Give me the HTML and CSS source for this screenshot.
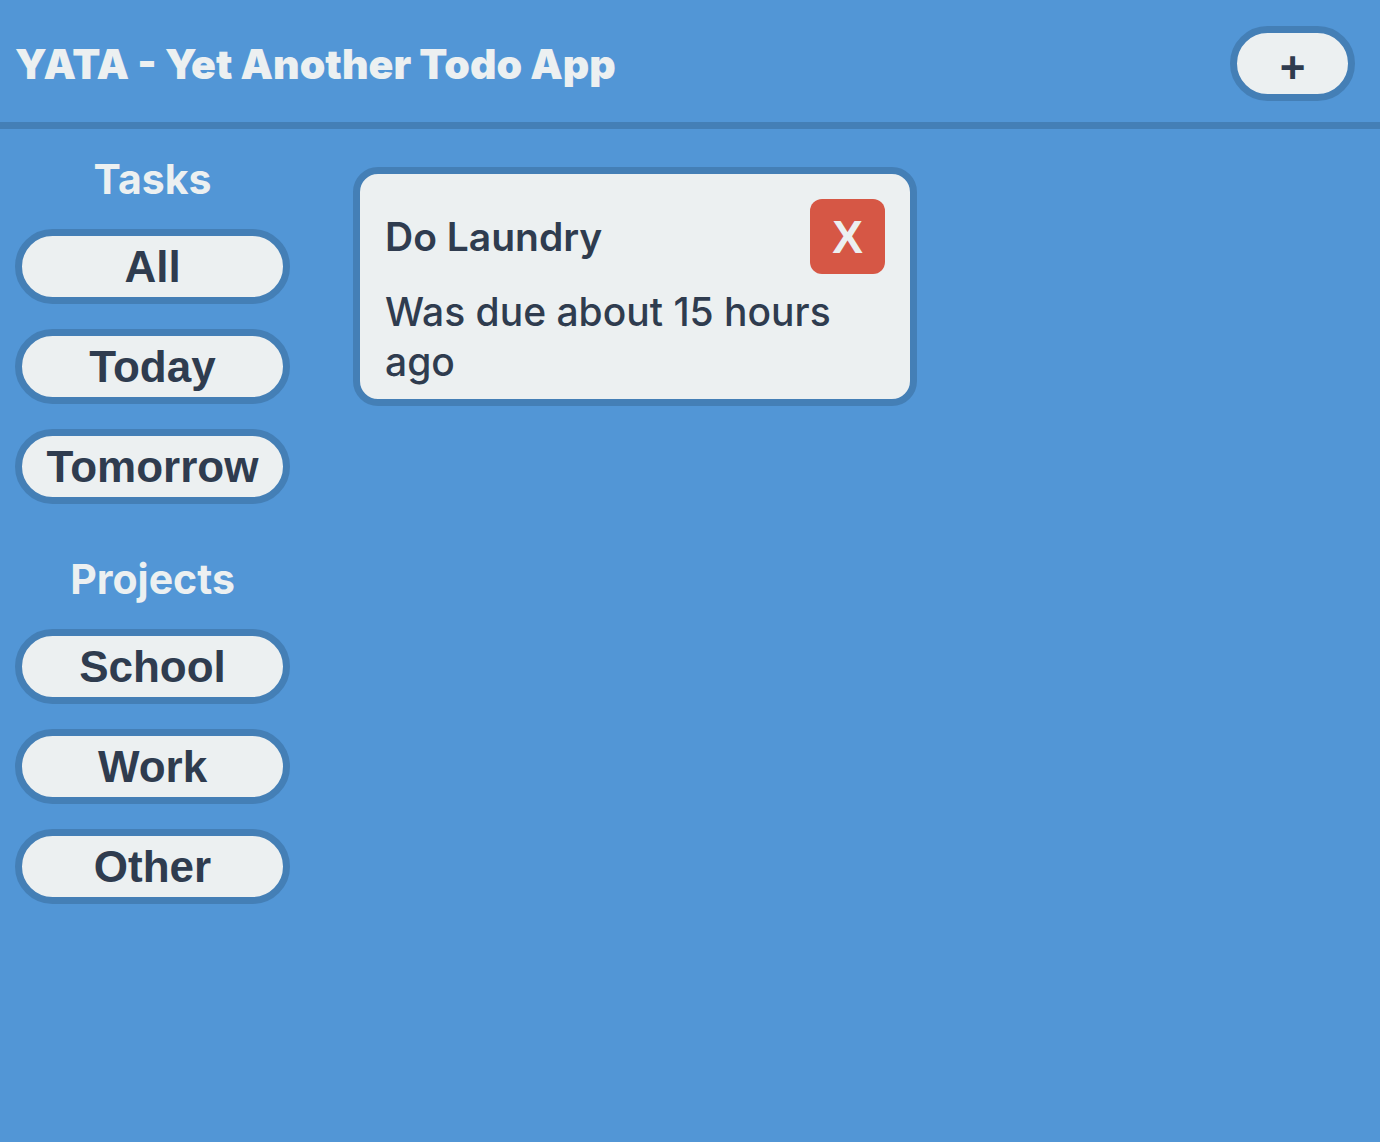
FILE: index.html
```html
<!DOCTYPE html>
<html lang="en">
<head>
<meta charset="utf-8">
<title>YATA - Yet Another Todo App</title>
<meta name="viewport" content="width=device-width, initial-scale=1">
<link rel="stylesheet" href="styles.css">
</head>
<body>
<header class="header">
  <h1 class="title">YATA - Yet Another Todo App</h1>
  <button class="pill add" type="button" aria-label="Add task">+</button>
</header>
<div class="layout">
  <nav class="sidebar">
    <section class="group">
      <h2 class="heading">Tasks</h2>
      <button class="pill" type="button">All</button>
      <button class="pill" type="button">Today</button>
      <button class="pill" type="button">Tomorrow</button>
    </section>
    <section class="group">
      <h2 class="heading">Projects</h2>
      <button class="pill" type="button">School</button>
      <button class="pill" type="button">Work</button>
      <button class="pill" type="button">Other</button>
    </section>
  </nav>
  <main class="tasks">
    <article class="card">
      <div class="card-head">
        <h3 class="name">Do Laundry</h3>
        <button class="delete" type="button" aria-label="Delete task">X</button>
      </div>
      <p class="due">Was due about 15 hours ago</p>
    </article>
  </main>
</div>
</body>
</html>
```
FILE: styles.css
```css
* {
  box-sizing: border-box;
  margin: 0;
}

body {
  min-height: 100vh;
  background: #5296d6;
  color: #2f3c4f;
  font: 500 39px/50px Inter, "Liberation Sans", sans-serif;
}

.header {
  display: flex;
  align-items: center;
  justify-content: space-between;
  padding: 26px 25px 21px 15px;
  border-bottom: 7px solid #447fb6;
}

.title {
  color: #ecf0f1;
  font-size: 41px;
  font-weight: 900;
}

.pill {
  height: 75px;
  padding: 0 24px;
  border: 7px solid #447fb6;
  border-radius: 38px;
  background: #ecf0f1;
  color: inherit;
  font: 700 44px/50px "Liberation Sans", Arial, sans-serif;
}

.add {
  width: 125px;
  padding-top: 8px;
}

.layout {
  display: grid;
  grid-template-columns: 275px 1fr;
  gap: 63px;
  padding: 25px 25px 25px 15px;
}

.sidebar {
  display: grid;
  align-content: start;
  gap: 50px;
}

.group {
  display: grid;
  gap: 25px;
}

.heading {
  color: #ecf0f1;
  font-size: 41px;
  font-weight: 700;
  line-height: 50px;
  text-align: center;
}

.tasks {
  display: grid;
  grid-template-columns: repeat(auto-fill, minmax(450px, 564px));
  align-content: start;
  padding-top: 13px;
}

.card {
  padding: 25px 25px 12px;
  border: 7px solid #447fb6;
  border-radius: 25px;
  background: #ecf0f1;
}

.card-head {
  display: flex;
  align-items: center;
  justify-content: space-between;
  margin-bottom: 13px;
}

.name {
  font-size: 39px;
  font-weight: 600;
}

.delete {
  width: 75px;
  height: 75px;
  padding: 0;
  border: 0;
  border-radius: 12px;
  background: #d65745;
  color: #ecf0f1;
  font: 700 46px/50px "Liberation Sans", Arial, sans-serif;
}
```
